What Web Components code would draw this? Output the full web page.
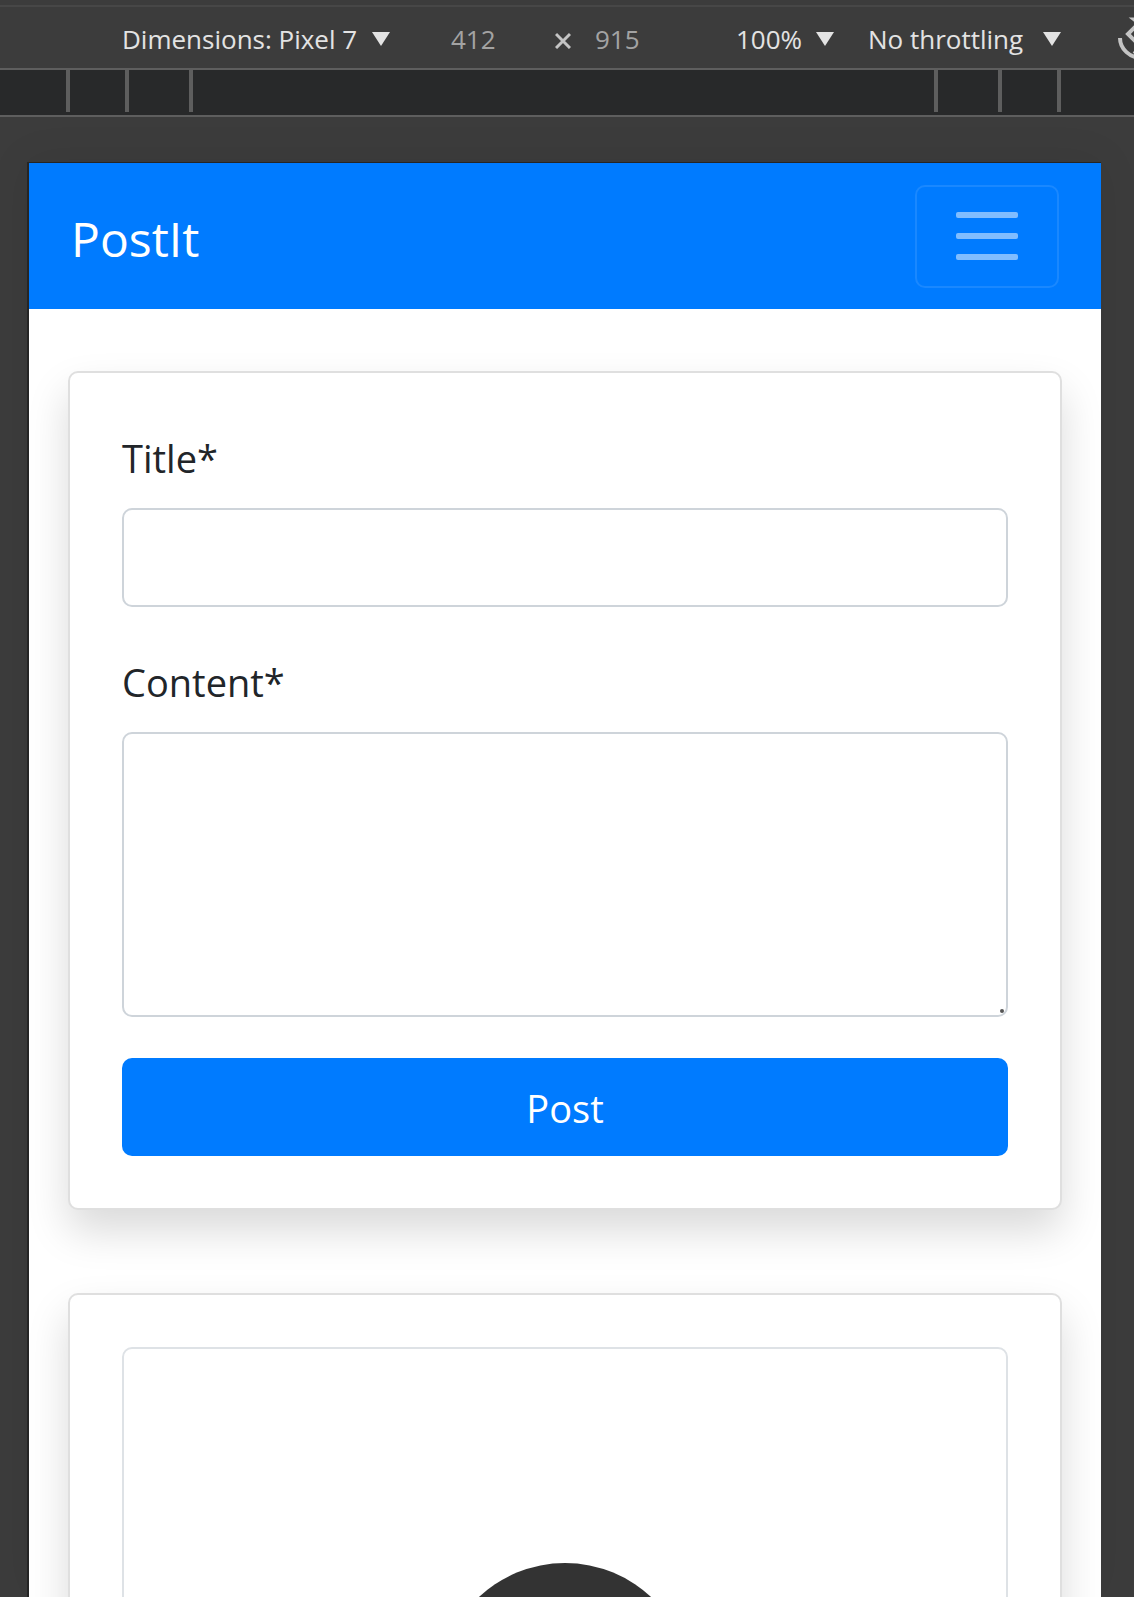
<!DOCTYPE html>
<html lang="en">
<head>
<meta charset="utf-8">
<meta name="viewport" content="width=device-width, initial-scale=1">
<title>PostIt</title>
<style>
html, body { margin: 0; height: 100%; overflow: hidden; }
body { background: #3c3c3c; font-family: "Segoe UI", "Open Sans", "Noto Sans", sans-serif; }
</style>
</head>
<body>
<device-emulator>
  <device-toolbar slot="toolbar"></device-toolbar>
  <size-ruler slot="ruler"></size-ruler>
  <nav-bar>PostIt</nav-bar>
  <main-column>
    <shadow-card><post-form></post-form></shadow-card>
    <shadow-card><post-picture></post-picture></shadow-card>
  </main-column>
</device-emulator>
<script>
function define(name, html) {
  const template = document.createElement('template');
  template.innerHTML = '<style>:host,*{box-sizing:border-box}</style>' + html;
  customElements.define(name, class extends HTMLElement {
    constructor() {
      super();
      this.attachShadow({ mode: 'open' }).append(template.content.cloneNode(true));
    }
  });
}

define('device-emulator', `
<style>
:host { display: flex; flex-direction: column; height: 100vh; overflow: hidden; }
.stage { flex: 1; min-height: 0; display: flex; padding: 45px 33px 0 27px; }
.screen { flex: 1; min-width: 0; overflow: hidden; background: #fff; border-top: 1px solid #252525; border-left: 2px solid #252525; box-shadow: 0 0 40px rgba(0,0,0,.08); }
</style>
<slot name="toolbar"></slot>
<slot name="ruler"></slot>
<div class="stage"><div class="screen"><slot></slot></div></div>`);

define('menu-select', `
<style>
:host { display: grid; align-items: center; }
select, svg { grid-area: 1 / 1; }
select { appearance: none; width: 100%; margin: 0; padding: 0 24px 0 0; border: 0; border-radius: 0; outline: 0; background: transparent; color: #e3e3e3; font: inherit; }
option { color: #e3e3e3; background: #3c3c3c; }
svg { justify-self: end; width: 18px; height: 14px; pointer-events: none; }
</style>
<select></select>
<svg viewBox="0 0 18 14"><path d="M0 0H18L9 14Z" fill="#e3e3e3"/></svg>`);

define('device-toolbar', `
<style>
:host { display: block; padding-top: 5px; font-size: 26px; line-height: 40px; }
.bar { display: flex; align-items: center; height: 65px; padding: 2px 0 0 122px; border-top: 2px solid #474747; border-bottom: 2px solid #5e5e5e; overflow: hidden; }
.device { flex: 0 0 268px; }
.size { display: flex; align-items: center; flex: 0 0 224px; margin-left: 61px; }
input { width: 104px; margin: 0; padding: 0; border: 0; outline: 0; background: transparent; color: #a3a3a3; font: inherit; }
.size input:last-child { width: 72px; margin-left: 24px; }
.zoom { flex: 0 0 98px; margin-left: 61px; }
.throttle { flex: 0 0 193px; margin-left: 34px; }
.cross { flex: none; width: 16px; height: 20px; }
button { flex: 0 0 48px; height: 48px; margin-left: 57px; padding: 0; border: 0; background: none; }
button svg { display: block; width: 48px; height: 48px; }
</style>
<div class="bar">
  <menu-select class="device"></menu-select>
  <div class="size">
    <input aria-label="Width" value="412">
    <svg class="cross" viewBox="0 0 16 20"><path d="M1 5 15 19M15 5 1 19" stroke="#c4c4c4" stroke-width="3"/></svg>
    <input aria-label="Height" value="915">
  </div>
  <menu-select class="zoom"></menu-select>
  <menu-select class="throttle"></menu-select>
  <button type="button" aria-label="Rotate"><svg viewBox="0 0 48 48" fill="none" stroke="#c4c4c4" stroke-width="4"><path d="M2 23A22 20 0 0 0 24 43L16 36"/><path d="M23 6 10 19 29 38 43 24Z"/><path d="M24 11 15 4 26 4A20 20 0 0 1 46 23" stroke-width="3"/></svg></button>
</div>`);

define('size-ruler', `
<style>
:host { display: flex; justify-content: center; height: 47px; background: #28292a; border-bottom: 2px solid #5e5e5e; padding-right: 7px; }
i { width: 4px; height: 42px; background: #5e5e5e; }
i + i { margin-left: 55px; }
i + i.near { margin-left: 60px; }
i + i.far { margin-left: 741px; }
</style>
<i></i><i></i><i class="near"></i><i class="far"></i><i class="near"></i><i></i>`);

define('nav-bar', `
<style>
:host { display: block; }
nav { display: flex; align-items: center; justify-content: space-between; height: 146px; padding: 0 42px; background: #007bff; }
a { padding-top: 6px; color: #fff; text-decoration: none; font-size: 48px; line-height: 78px; }
button { display: grid; place-items: center; width: 144px; height: 103px; padding: 0; border: 2px solid rgba(255,255,255,.1); border-radius: 10px; background: none; }
svg { width: 62px; height: 48px; }
</style>
<nav><a href="#"><slot></slot></a>
<button type="button" aria-label="Toggle navigation"><svg viewBox="0 0 62 48" fill="#80bdff"><rect width="62" height="6" rx="2"/><rect y="21" width="62" height="6" rx="2"/><rect y="42" width="62" height="6" rx="2"/></svg></button></nav>`);

define('main-column', `
<style>
:host { display: flex; flex-direction: column; gap: 83px; padding: 62px 39px; }
</style><slot></slot>`);

define('shadow-card', `
<style>
:host { display: block; padding: 52px; background: #fff; border: 2px solid #dfdfdf; border-radius: 10px; box-shadow: 0 21px 42px rgba(0,0,0,.15); }
</style><slot></slot>`);

define('post-form', `
<style>
:host { display: block; font-size: 38px; color: #212529; }
form { display: flex; flex-direction: column; }
label { line-height: 66px; margin-bottom: 17px; }
input, textarea { display: block; width: 100%; margin: 0; padding: 16px 31px; border: 2px solid #ced4da; border-radius: 10px; background: #fff; color: #495057; font: inherit; outline: 0; }
input { height: 99px; margin-bottom: 42px; }
.area { position: relative; margin-bottom: 41px; }
textarea { height: 285px; resize: none; }
.grip { position: absolute; right: 4px; bottom: 4px; width: 4px; height: 4px; }
button { height: 98px; padding: 2px 0 0; border: 0; border-radius: 10px; background: #007bff; color: #fff; font: inherit; }
</style>
<form>
<label for="title">Title*</label><input id="title" type="text">
<label for="content">Content*</label>
<div class="area"><textarea id="content"></textarea><svg class="grip" viewBox="0 0 4 4"><circle cx="2" cy="2" r="2" fill="#555"/></svg></div>
<button type="button">Post</button>
</form>`);

define('post-picture', `
<style>
:host { display: flex; justify-content: center; padding: 214px 0; border: 2px solid #dee2e6; border-radius: 10px; }
svg { width: 252px; height: 252px; }
</style>
<svg viewBox="0 0 252 252"><circle cx="126" cy="126" r="126" fill="#333"/></svg>`);

const toolbar = document.querySelector('device-toolbar').shadowRoot;
const choices = { '.device': 'Dimensions: Pixel 7', '.zoom': '100%', '.throttle': 'No throttling' };
const names = { '.device': 'Device', '.zoom': 'Zoom', '.throttle': 'Network' };
for (const key in choices) {
  const select = toolbar.querySelector(key).shadowRoot.querySelector('select');
  select.setAttribute('aria-label', names[key]);
  select.add(new Option(choices[key]));
}
</script>
</body>
</html>
